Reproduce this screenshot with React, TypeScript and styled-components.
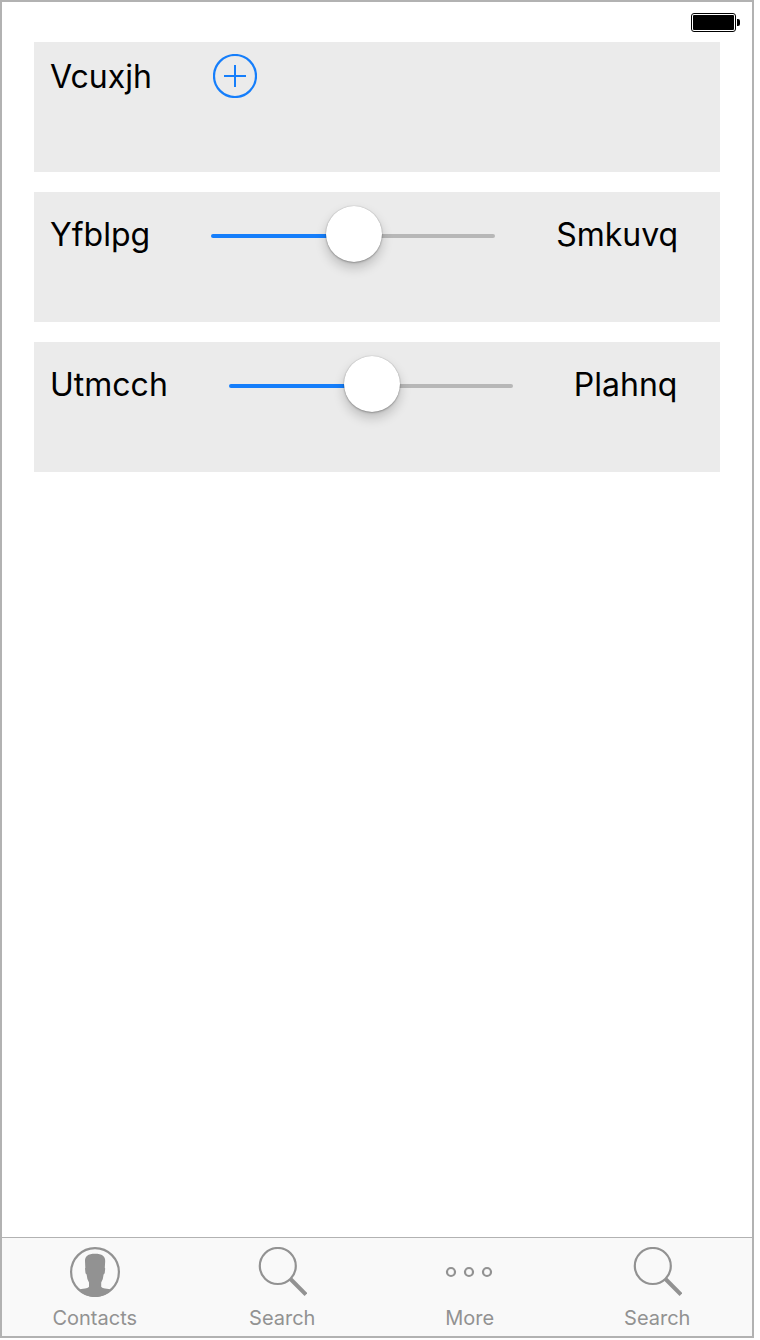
import React, { useId, useState } from "react";
import styled, { createGlobalStyle } from "styled-components";

const GlobalStyle = createGlobalStyle`
  *, *::before, *::after { box-sizing: border-box; }
  body {
    margin: 0;
    background: #ffffff;
    color: #000000;
    font-family: Inter, "Liberation Sans", sans-serif;
  }
`;

const Screen = styled.div`
  display: flex;
  flex-direction: column;
  min-height: calc(100vh - 2px);
  margin-right: 6px;
  border: 2px solid #b2b2b2;
`;

const StatusBar = styled.header`
  display: flex;
  justify-content: flex-end;
  align-items: center;
  height: 40px;
  padding-right: 12px;
`;

const Content = styled.main`
  display: flex;
  flex: 1;
  flex-direction: column;
  gap: 20px;
  padding: 0 32px;
`;

const Card = styled.section`
  display: flex;
  align-items: flex-start;
  min-height: 130px;
  padding: 12px 16px;
  background: #ebebeb;
`;

const Row = styled.div`
  display: flex;
  align-items: center;
  gap: 61px;
`;

const Caption = styled.label`
  padding-top: 2px;
  font-size: 32px;
  line-height: 40px;
  white-space: nowrap;
`;

const AddButton = styled.button`
  display: block;
  padding: 0;
  border: 0;
  background: none;
  color: #157efb;
  cursor: pointer;

  svg { display: block; }
`;

const SliderInput = styled.input`
  appearance: none;
  width: 284px;
  height: 60px;
  margin: 0;
  padding: 4px 0 0;
  background: none;

  &::-webkit-slider-runnable-track {
    height: 4px;
    border-radius: 2px;
    background: linear-gradient(to right, #157efb var(--fill), #b7b7b7 var(--fill));
  }

  &::-webkit-slider-thumb {
    appearance: none;
    width: 56px;
    height: 56px;
    margin-top: -28px;
    border: 0;
    border-radius: 50%;
    background: #ffffff;
    box-shadow: 0 0 1px rgba(0, 0, 0, 0.3), 0 1px 2px rgba(0, 0, 0, 0.25),
      0 6px 12px rgba(0, 0, 0, 0.2);
  }
`;

const TabBar = styled.nav`
  display: flex;
  gap: 2px;
  height: 99px;
  padding-right: 2px;
  border-top: 1px solid #b2b2b2;
  background: #f9f9f9;
`;

const Tab = styled.a`
  display: flex;
  flex: 1;
  flex-direction: column;
  align-items: center;
  gap: 9px;
  padding-top: 9px;
  color: #929292;
  font-size: 20px;
  line-height: 24px;
  text-decoration: none;

  svg { display: block; }
`;

const BatteryIcon = () => (
  <svg width="49" height="19" viewBox="0 0 49 19" role="img" aria-label="Battery full">
    <rect x="0.5" y="0.5" width="44" height="18" rx="2.5" fill="none" stroke="#000" />
    <rect x="2" y="2" width="41" height="15" rx="1" fill="#000" />
    <path d="M46 6 h1 a2 2 0 0 1 2 2 v3 a2 2 0 0 1 -2 2 h-1 z" fill="#000" />
  </svg>
);

const AddIcon = () => (
  <svg width="44" height="44" viewBox="0 0 44 44" fill="none" stroke="currentColor" strokeWidth="2" aria-hidden="true">
    <circle cx="22" cy="22" r="21" strokeWidth="2.2" />
    <path d="M22 11 V33 M11 22 H33" />
  </svg>
);

const ContactsIcon = () => (
  <svg width="50" height="50" viewBox="0 0 50 50" aria-hidden="true">
    <circle cx="25" cy="25" r="23.9" fill="none" stroke="currentColor" strokeWidth="2.2" />
    <path
      fill="currentColor"
      d="M25 6.8 C21.5 6.8 19 7.2 17.2 8.8 C15.4 10.4 14.9 12 15 14 L15.3 20.8 L15 21.6 L15.5 26.2 L16.6 27.6 L17.4 32 L19 35.4 L19 39.8 C18 41 16.5 41.2 15 41.4 C12.4 41.7 10.2 42 8.6 43.2 C13 47.2 18.6 50 25 50 C31.4 50 37 47.2 41.4 43.2 C39.8 42 37.6 41.7 35 41.4 C33.5 41.2 32.2 41 31.2 39.8 L31.2 35.4 L32.8 32 L33.6 27.6 L34.7 26.2 L35.2 21.6 L34.8 20.8 L35.2 14 C35.2 12 34.8 10.4 33 8.8 C31 7.2 28.5 6.8 25 6.8 Z"
    />
  </svg>
);

const SearchIcon = () => (
  <svg width="50" height="50" viewBox="0 0 50 50" fill="none" stroke="currentColor" aria-hidden="true">
    <circle cx="20.8" cy="19" r="18" strokeWidth="2.2" />
    <path d="M33.5 32 L49 47.5" strokeWidth="4" />
  </svg>
);

const MoreIcon = () => (
  <svg width="50" height="50" viewBox="0 0 50 50" fill="none" stroke="currentColor" strokeWidth="2.2" aria-hidden="true">
    <circle cx="6" cy="25" r="4" />
    <circle cx="24" cy="25" r="4" />
    <circle cx="42" cy="25" r="4" />
  </svg>
);

const SLIDER_MAX = 200;

function SliderCard({ before, after }: { before: string; after: string }) {
  const id = useId();
  const [value, setValue] = useState(101);
  const fill = { "--fill": `${(value / SLIDER_MAX) * 100}%` } as React.CSSProperties;

  return (
    <Card>
      <Row>
        <Caption htmlFor={id}>{before}</Caption>
        <SliderInput
          id={id}
          type="range"
          min={0}
          max={SLIDER_MAX}
          value={value}
          onChange={(event) => setValue(Number(event.target.value))}
          style={fill}
        />
        <Caption htmlFor={id}>{after}</Caption>
      </Row>
    </Card>
  );
}

const tabs = [
  { id: "contacts", label: "Contacts", Icon: ContactsIcon },
  { id: "search", label: "Search", Icon: SearchIcon },
  { id: "more", label: "More", Icon: MoreIcon },
  { id: "search-all", label: "Search", Icon: SearchIcon },
];

export default function App() {
  return (
    <>
      <GlobalStyle />
      <Screen>
        <StatusBar>
          <BatteryIcon />
        </StatusBar>
        <Content>
          <Card>
            <Row>
              <Caption htmlFor="add">Vcuxjh</Caption>
              <AddButton id="add" type="button">
                <AddIcon />
              </AddButton>
            </Row>
          </Card>
          <SliderCard before="Yfblpg" after="Smkuvq" />
          <SliderCard before="Utmcch" after="Plahnq" />
        </Content>
        <TabBar>
          {tabs.map(({ id, label, Icon }) => (
            <Tab key={id} href={`#${id}`}>
              <Icon />
              {label}
            </Tab>
          ))}
        </TabBar>
      </Screen>
    </>
  );
}
